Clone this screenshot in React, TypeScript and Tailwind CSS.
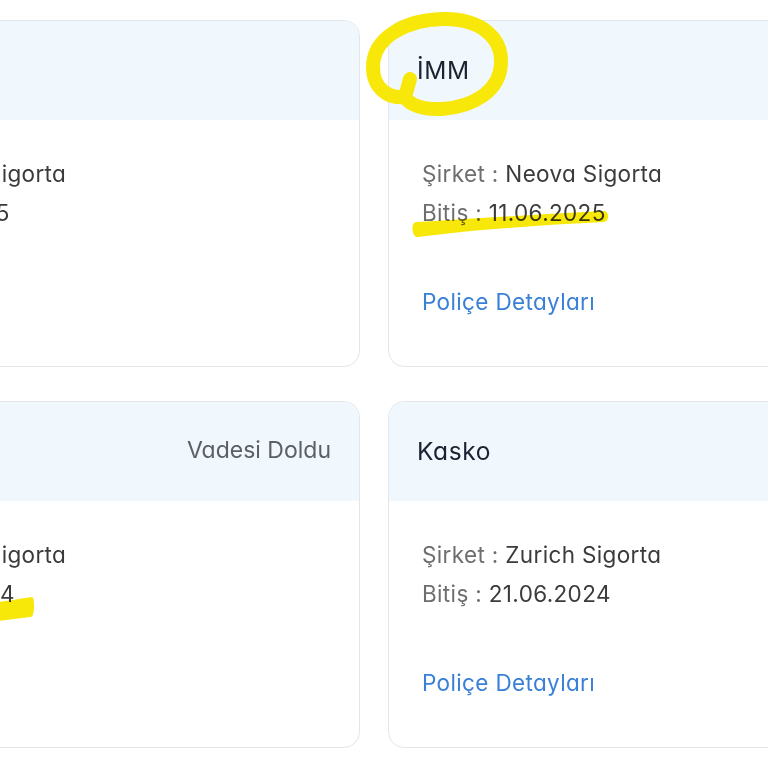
const POLICIES = [
  { title: 'Trafik', status: '', company: 'Neova Sigorta', end: '11.06.2025' },
  { title: 'İMM', status: '', company: 'Neova Sigorta', end: '11.06.2025' },
  { title: 'Kasko', status: 'Vadesi Doldu', company: 'Neova Sigorta', end: '21.06.2024' },
  { title: 'Kasko', status: '', company: 'Zurich Sigorta', end: '21.06.2024' },
]

function PolicyCard({ title, status, company, end }: (typeof POLICIES)[number]) {
  return (
    <div className="h-[347px] rounded-2xl border border-[#e2e5e9] bg-white overflow-hidden flex flex-col">
      <div className="h-[99px] shrink-0 bg-[#f0f7fd] px-7 flex items-center justify-between">
        <span className="text-[24.5px] tracking-[0.6px] text-[#1b2230]">{title}</span>
        {status && <span className="text-[23px] text-[#5c5f63] mt-[-3px]">{status}</span>}
      </div>
      <div className="px-[33px] pt-[34px] flex flex-col text-[22.5px] leading-[39px] tracking-[0.35px]">
        <div>
          <span className="text-[#6e6e6e]">Şirket : </span>
          <span className="text-[#3b3b3b]">{company}</span>
        </div>
        <div>
          <span className="text-[#6e6e6e]">Bitiş : </span>
          <span className="text-[#3b3b3b]">{end}</span>
        </div>
        <a className="mt-[50px] text-[#3a80d6]">Poliçe Detayları</a>
      </div>
    </div>
  )
}

export default function App() {
  return (
    <div className="relative w-[768px] h-[768px] overflow-hidden bg-white font-['Inter',sans-serif] [font-feature-settings:'cv11']">
      <div className="ml-[-208px] pt-5 grid grid-cols-[568px_568px] gap-x-7 gap-y-[34px]">
        {POLICIES.map((p, i) => (
          <PolicyCard key={i} {...p} />
        ))}
      </div>

      {/* highlighter marks */}
      <svg className="absolute inset-0 pointer-events-none" width="768" height="768" viewBox="0 0 768 768">
        <path
          d="M410 79 L405 97 C388 99 373 88 373 67 C373 38 405 20 442 19 C481 18 502 38 501 63 C500 92 472 107 442 109 C421 110 409 104 405 97"
          fill="none"
          stroke="#f8e80a"
          strokeWidth="14"
          strokeLinecap="round"
          strokeLinejoin="round"
        />
      </svg>
      <svg className="absolute inset-0 pointer-events-none mix-blend-multiply" width="768" height="768" viewBox="0 0 768 768">
        <g fill="#f8e80a">
          <path d="M416 222 C470 219 540 214 604 211 C609 211 610 221 604 222 C540 225 470 230 418 237 C412 238 410 223 416 222 Z" />
          <path d="M-4 602 C10 601 22 598 32 597 C35 597 35 616 31 617 C20 618 10 620 -4 621 Z" />
        </g>
      </svg>
    </div>
  )
}
